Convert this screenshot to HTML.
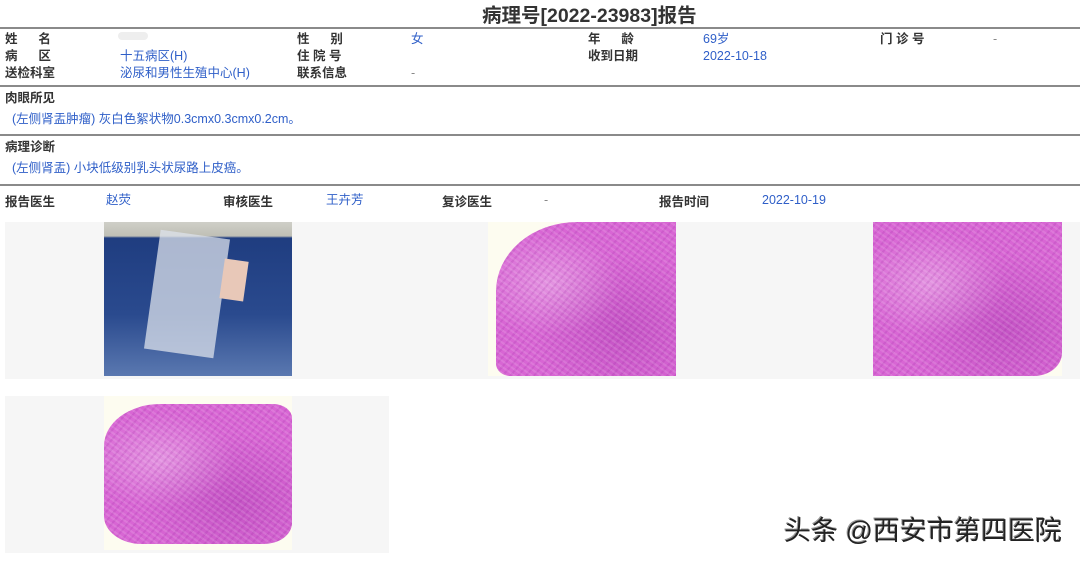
<!DOCTYPE html>
<html><head><meta charset="utf-8"><style>
*{margin:0;padding:0;box-sizing:border-box}
body{width:1080px;height:561px;background:#fff;position:relative;overflow:hidden;font-family:"Liberation Sans","Noto Sans CJK SC",sans-serif;font-size:12.5px;color:#222}
.a{position:absolute;white-space:nowrap;line-height:14px}
.b{font-weight:600;color:#333}
.v{color:#2f5fc8}
.hr{position:absolute;left:0;width:1080px;height:2px;background:#8a8a8a}
.g{position:absolute;background:#f6f6f6}
.pink{position:absolute;background:
repeating-linear-gradient(35deg,rgba(255,255,255,.12) 0 2px,transparent 2px 5px),
repeating-linear-gradient(-50deg,rgba(140,30,150,.15) 0 2px,transparent 2px 6px),
radial-gradient(ellipse at 30% 40%,rgba(255,255,255,.3),transparent 40%),
radial-gradient(ellipse at 70% 70%,rgba(150,40,160,.3),transparent 50%),
#d866d4}
</style></head><body>
<div class="a" style="left:482px;top:5px;font-size:19.5px;line-height:22px;font-weight:bold;color:#333">病理号[2022-23983]报告</div>
<div class="hr" style="top:27px"></div>
<div class="a b" style="left:5px;top:32px">姓&nbsp;&nbsp;&nbsp;&nbsp;&nbsp;&nbsp;名</div>
<div class="a b" style="left:5px;top:49px">病&nbsp;&nbsp;&nbsp;&nbsp;&nbsp;&nbsp;区</div>
<div class="a b" style="left:5px;top:66px">送检科室</div>
<div class="a" style="left:118px;top:32px;width:30px;height:8px;background:#eee;border-radius:4px"></div>
<div class="a v" style="left:120px;top:49px">十五病区(H)</div>
<div class="a v" style="left:120px;top:66px">泌尿和男性生殖中心(H)</div>
<div class="a b" style="left:297px;top:32px">性&nbsp;&nbsp;&nbsp;&nbsp;&nbsp;&nbsp;别</div>
<div class="a b" style="left:297px;top:49px">住 院 号</div>
<div class="a b" style="left:297px;top:66px">联系信息</div>
<div class="a v" style="left:411px;top:32px">女</div>
<div class="a" style="left:411px;top:66px;color:#888">-</div>
<div class="a b" style="left:588px;top:32px">年&nbsp;&nbsp;&nbsp;&nbsp;&nbsp;&nbsp;龄</div>
<div class="a b" style="left:588px;top:49px">收到日期</div>
<div class="a v" style="left:703px;top:32px">69岁</div>
<div class="a v" style="left:703px;top:49px">2022-10-18</div>
<div class="a b" style="left:880px;top:32px">门 诊 号</div>
<div class="a" style="left:993px;top:32px;color:#888">-</div>
<div class="hr" style="top:85px"></div>
<div class="a b" style="left:5px;top:91px">肉眼所见</div>
<div class="a v" style="left:12px;top:112px">(左侧肾盂肿瘤) 灰白色絮状物0.3cmx0.3cmx0.2cm。</div>
<div class="hr" style="top:134px"></div>
<div class="a b" style="left:5px;top:140px">病理诊断</div>
<div class="a v" style="left:12px;top:161px">(左侧肾盂) 小块低级别乳头状尿路上皮癌。</div>
<div class="hr" style="top:184px"></div>
<div class="a b" style="left:5px;top:195px">报告医生</div>
<div class="a v" style="left:106px;top:193px">赵荧</div>
<div class="a b" style="left:223px;top:195px">审核医生</div>
<div class="a v" style="left:326px;top:193px">王卉芳</div>
<div class="a b" style="left:442px;top:195px">复诊医生</div>
<div class="a" style="left:544px;top:193px;color:#888">-</div>
<div class="a b" style="left:659px;top:195px">报告时间</div>
<div class="a v" style="left:762px;top:193px">2022-10-19</div>
<div class="g" style="left:5px;top:222px;width:1075px;height:157px"></div>
<div class="g" style="left:5px;top:396px;width:384px;height:157px"></div>
<div style="position:absolute;left:104px;top:222px;width:188px;height:154px;overflow:hidden;background:linear-gradient(180deg,#cfcfc8 0,#bfbfb5 14px,#1f3d80 16px,#2a4a8e 60%,#5a78b0 100%)">
 <div style="position:absolute;left:48px;top:12px;width:70px;height:120px;background:rgba(220,225,235,.75);transform:rotate(8deg)"></div>
 <div style="position:absolute;left:118px;top:38px;width:24px;height:40px;background:#e8c8b8;transform:rotate(8deg)"></div>
</div>
<div style="position:absolute;left:488px;top:222px;width:188px;height:154px;background:#fdfcf0;overflow:hidden"><div class="pink" style="left:8px;top:0;width:180px;height:154px;border-radius:45% 0 0 8%"></div></div>
<div style="position:absolute;left:873px;top:222px;width:189px;height:154px;background:#fdfcf0;overflow:hidden"><div class="pink" style="left:0;top:0;width:189px;height:154px;border-radius:0 0 15% 0"></div></div>
<div style="position:absolute;left:104px;top:396px;width:188px;height:154px;background:#fdfcf0;overflow:hidden"><div class="pink" style="left:0;top:8px;width:188px;height:140px;border-radius:30% 10% 15% 20%"></div></div>
<div class="a" style="left:784px;top:516px;font-size:27px;line-height:30px;color:#222;text-shadow:1px 1px 0 #fff,-1px -1px 0 #999">头条 @西安市第四医院</div>
</body></html>
